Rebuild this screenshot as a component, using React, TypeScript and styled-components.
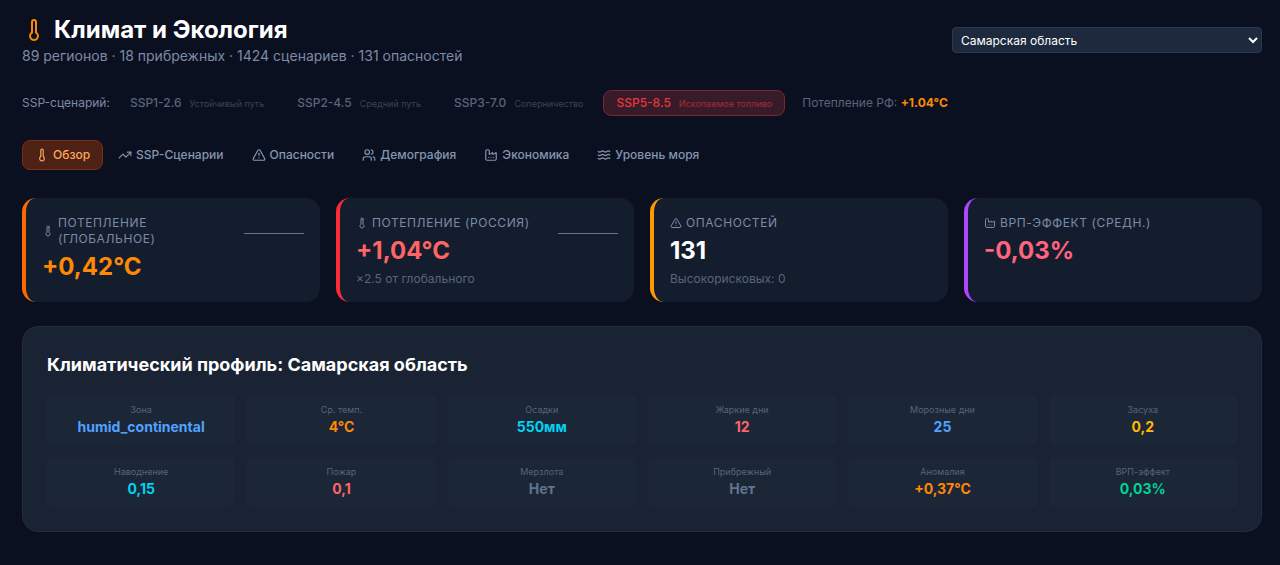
import React, { useState } from 'react';
import styled, { createGlobalStyle } from 'styled-components';
import { Thermometer, TrendingUp, TriangleAlert, Users, Factory, Waves, type LucideIcon } from 'lucide-react';

const GlobalStyle = createGlobalStyle`
  *, *::before, *::after { box-sizing: border-box; }
  body { margin: 0; background: #0b1020; }
  body, button, select { font-family: Inter, "Liberation Sans", sans-serif; }
  h1, h2, p, dl, dt, dd { margin: 0; }
`;

const Page = styled.main`
  min-height: 100vh;
  padding: 14px 18px 32px 22px;
  display: flex;
  flex-direction: column;
  gap: 24px;
  color: #ffffff;
`;

const Header = styled.header`
  display: flex;
  align-items: center;
  justify-content: space-between;
`;

const Title = styled.h1`
  display: flex;
  align-items: center;
  gap: 8px;
  font-size: 24px;
  line-height: 32px;
  font-weight: 700;
  svg { color: #ff8904; }
`;

const Subtitle = styled.p`
  color: #7c8ba5;
  font-size: 14px;
  line-height: 20px;
`;

const RegionSelect = styled.select`
  width: 310px;
  height: 26px;
  padding: 0 4px;
  border: 1px solid #2b394d;
  border-radius: 4px;
  background: #1d293d;
  color: #ffffff;
  color-scheme: dark;
  font-size: 12px;
`;

const ScenarioBar = styled.section`
  display: flex;
  align-items: center;
  gap: 7px;
  font-size: 12px;
  line-height: 16px;
`;

const ScenarioLabel = styled.span`
  color: #7c8ba5;
`;

const ScenarioButton = styled.button<{ $active: boolean }>`
  display: flex;
  align-items: baseline;
  gap: 8px;
  height: 26px;
  padding: 4px 12px;
  border: 1px solid ${p => (p.$active ? '#7b2434' : 'transparent')};
  border-radius: 8px;
  background: ${p => (p.$active ? '#381b28' : 'transparent')};
  color: ${p => (p.$active ? '#e7373e' : '#57657b')};
  font-size: 12px;
  line-height: 16px;
  font-weight: 500;
  cursor: pointer;
  small {
    font-size: 9px;
    font-weight: 400;
    opacity: 0.6;
  }
`;

const Warming = styled.span`
  margin-left: 10px;
  color: #57657b;
  strong { color: #ff8904; }
`;

const Tabs = styled.nav`
  display: flex;
  gap: 2px;
  margin-bottom: 4px;
`;

const Tab = styled.button<{ $active: boolean }>`
  display: flex;
  align-items: center;
  gap: 4px;
  height: 30px;
  padding: 0 12px;
  border: 1px solid ${p => (p.$active ? '#7a300f' : 'transparent')};
  border-radius: 8px;
  background: ${p => (p.$active ? '#4e2117' : 'transparent')};
  color: ${p => (p.$active ? '#ffa95a' : '#8596b0')};
  font-size: 12px;
  line-height: 16px;
  font-weight: 500;
  cursor: pointer;
`;

const StatGrid = styled.section`
  display: grid;
  grid-template-columns: repeat(4, 1fr);
  gap: 16px;
`;

const StatCard = styled.article<{ $accent: string }>`
  display: flex;
  align-items: flex-start;
  justify-content: space-between;
  min-height: 104px;
  padding: 17px 16px 14px;
  border-left: 4px solid ${p => p.$accent};
  border-radius: 14px;
  background: #141d2e;
`;

const StatLabel = styled.p`
  display: flex;
  align-items: center;
  gap: 4px;
  color: #7c8ba5;
  font-size: 12px;
  line-height: 16px;
  letter-spacing: 0.05em;
  text-transform: uppercase;
  svg { flex: none; }
`;

const StatValue = styled.p<{ $color: string }>`
  color: ${p => p.$color};
  font-size: 24px;
  line-height: 32px;
  font-weight: 700;
  margin-top: 4px;
`;

const StatNote = styled.p`
  margin-top: 4px;
  color: #57657b;
  font-size: 12px;
  line-height: 16px;
`;

const Sparkline = styled.svg`
  flex: none;
  width: 60px;
  height: 40px;
  stroke: #62748e;
`;

const Panel = styled.section`
  padding: 24px;
  border: 1px solid #212c3c;
  border-radius: 16px;
  background: #1a2333;
`;

const PanelTitle = styled.h2`
  font-size: 18px;
  line-height: 28px;
  font-weight: 700;
`;

const Metrics = styled.dl`
  display: grid;
  grid-template-columns: repeat(6, 1fr);
  gap: 12px;
  margin-top: 16px;
`;

const Metric = styled.div`
  padding: 8px;
  border-radius: 4px;
  background: #1b2637;
  text-align: center;
`;

const MetricLabel = styled.dt`
  color: #57657b;
  font-size: 9px;
  line-height: 14px;
`;

const MetricValue = styled.dd<{ $color: string }>`
  color: ${p => p.$color};
  font-size: 14px;
  line-height: 20px;
  font-weight: 700;
`;

const scenarios = [
  ['SSP1-2.6', 'Устойчивый путь'],
  ['SSP2-4.5', 'Средний путь'],
  ['SSP3-7.0', 'Соперничество'],
  ['SSP5-8.5', 'Ископаемое топливо'],
];

const tabs: [LucideIcon, string][] = [
  [Thermometer, 'Обзор'],
  [TrendingUp, 'SSP-Сценарии'],
  [TriangleAlert, 'Опасности'],
  [Users, 'Демография'],
  [Factory, 'Экономика'],
  [Waves, 'Уровень моря'],
];

interface Stat {
  icon: LucideIcon;
  label: string;
  value: string;
  color: string;
  accent: string;
  note?: string;
  trend?: boolean;
}

const stats: Stat[] = [
  { icon: Thermometer, label: 'Потепление (глобальное)', value: '+0,42°C', color: '#ff8904', accent: '#ff6900', trend: true },
  { icon: Thermometer, label: 'Потепление (Россия)', value: '+1,04°C', color: '#ff6467', accent: '#fb2c36', note: '×2.5 от глобального', trend: true },
  { icon: TriangleAlert, label: 'Опасностей', value: '131', color: '#ffffff', accent: '#fe9a00', note: 'Высокорисковых: 0' },
  { icon: Factory, label: 'ВРП-эффект (средн.)', value: '-0,03%', color: '#ff637e', accent: '#ad46ff' },
];

const metrics = [
  ['Зона', 'humid_continental', '#51a2ff'],
  ['Ср. темп.', '4°C', '#ff8904'],
  ['Осадки', '550мм', '#00d3f2'],
  ['Жаркие дни', '12', '#ff6467'],
  ['Морозные дни', '25', '#51a2ff'],
  ['Засуха', '0,2', '#ffb900'],
  ['Наводнение', '0,15', '#00d3f2'],
  ['Пожар', '0,1', '#ff6467'],
  ['Мерзлота', 'Нет', '#62748e'],
  ['Прибрежный', 'Нет', '#62748e'],
  ['Аномалия', '+0,37°C', '#ff8904'],
  ['ВРП-эффект', '0,03%', '#00d492'],
];

export default function App() {
  const [scenario, setScenario] = useState('SSP5-8.5');
  const [tab, setTab] = useState('Обзор');
  return (
    <>
      <GlobalStyle />
      <Page>
        <Header>
          <div>
            <Title><Thermometer size={24} />Климат и Экология</Title>
            <Subtitle>89 регионов · 18 прибрежных · 1424 сценариев · 131 опасностей</Subtitle>
          </div>
          <RegionSelect aria-label="Регион">
            <option>Самарская область</option>
          </RegionSelect>
        </Header>
        <ScenarioBar>
          <ScenarioLabel>SSP-сценарий:</ScenarioLabel>
          {scenarios.map(([code, name]) => (
            <ScenarioButton key={code} type="button" $active={code === scenario} onClick={() => setScenario(code)}>
              {code}<small>{name}</small>
            </ScenarioButton>
          ))}
          <Warming>Потепление РФ: <strong>+1.04°C</strong></Warming>
        </ScenarioBar>
        <Tabs>
          {tabs.map(([Icon, name]) => (
            <Tab key={name} type="button" $active={name === tab} onClick={() => setTab(name)}>
              <Icon size={14} />{name}
            </Tab>
          ))}
        </Tabs>
        <StatGrid>
          {stats.map(s => (
            <StatCard key={s.label} $accent={s.accent}>
              <div>
                <StatLabel><s.icon size={12} />{s.label}</StatLabel>
                <StatValue $color={s.color}>{s.value}</StatValue>
                {s.note && <StatNote>{s.note}</StatNote>}
              </div>
              {s.trend && (
                <Sparkline viewBox="0 0 60 40" aria-hidden="true"><path d="M0 18.5H60" /></Sparkline>
              )}
            </StatCard>
          ))}
        </StatGrid>
        <Panel>
          <PanelTitle>Климатический профиль: Самарская область</PanelTitle>
          <Metrics>
            {metrics.map(([label, value, color]) => (
              <Metric key={label}>
                <MetricLabel>{label}</MetricLabel>
                <MetricValue $color={color}>{value}</MetricValue>
              </Metric>
            ))}
          </Metrics>
        </Panel>
      </Page>
    </>
  );
}
